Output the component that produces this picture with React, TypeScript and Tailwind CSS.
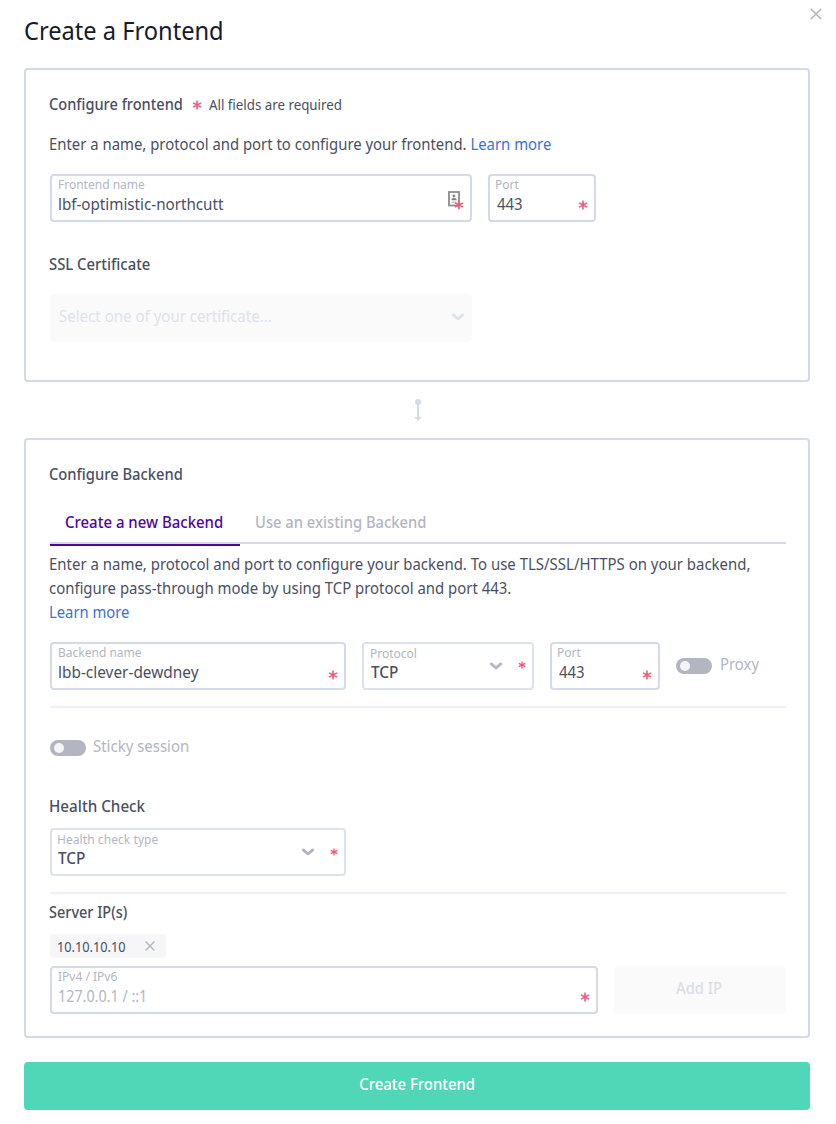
import type { ReactNode } from "react";

const FONT = "font-['Noto_Sans','Open_Sans',sans-serif]";

function Text({ children, className = "scale-x-[0.935]" }: { children: ReactNode; className?: string }) {
  return <span className={`inline-block origin-left ${className}`}>{children}</span>;
}

function Asterisk({ size = 10, className = "" }: { size?: number; className?: string }) {
  return (
    <svg width={size} height={size} viewBox="0 0 10 10" className={`shrink-0 ${className}`} stroke="#f0587c" strokeWidth="1.6" fill="none">
      <path d="M5 0.6V9.4M1 2.9L9 7.1M9 2.9L1 7.1" />
    </svg>
  );
}

function Chevron({ className = "" }: { className?: string }) {
  return (
    <svg width="14" height="10" viewBox="0 0 14 10" className={`shrink-0 ${className}`} stroke="currentColor" strokeWidth="2.8" strokeLinecap="round" strokeLinejoin="round" fill="none">
      <path d="M2.3 2.9L7 7L11.7 2.9" />
    </svg>
  );
}

function Cross({ size }: { size: number }) {
  return (
    <svg width={size} height={size} viewBox="0 0 12 12" stroke="#b2b6c3" strokeWidth="1.6" fill="none">
      <path d="M0.7 0.7L11.3 11.3M11.3 0.7L0.7 11.3" />
    </svg>
  );
}

function ContactIcon() {
  return (
    <svg width="12" height="16" viewBox="0 0 12 16" fill="none">
      <rect x="1" y="1" width="10" height="13.5" stroke="#8c8c8c" strokeWidth="1.8" />
      <circle cx="6" cy="5" r="1.4" fill="#858585" />
      <path d="M3.4 9.2C3.4 6 8.6 6 8.6 9.2Z" fill="#858585" />
      <path d="M3.4 11.2H8.6" stroke="#b0b0b0" />
    </svg>
  );
}

function Toggle() {
  return (
    <span className="flex h-4 w-9 shrink-0 items-center rounded-full bg-[#b2b6c3] pl-1">
      <span className="size-[10px] rounded-full bg-[#f5f5f8]" />
    </span>
  );
}

function Field({ label, value, className, children, light = false, labelClass = "" }: { label: string; value: ReactNode; className: string; children?: ReactNode; light?: boolean; labelClass?: string }) {
  return (
    <div className={`flex h-12 shrink-0 rounded-[4px] border-2 pl-1.5 ${light ? "border-[#dde1eb]" : "border-[#d4dae7]"} ${className}`}>
      <div className="flex min-w-0 flex-1 flex-col whitespace-nowrap">
        <div className={`mt-px h-4 text-[12px] leading-4 text-[#b2b6c3] ${labelClass}`}><span>{label}</span></div>
        <div className="-mt-px h-6 text-base leading-6">{value}</div>
      </div>
      {children}
    </div>
  );
}

export default function App() {
  return (
    <main className={`h-[1124px] w-[836px] bg-white px-6 text-base leading-6 whitespace-nowrap text-[#4a4f62] ${FONT}`}>
      <header className="flex h-[68px] justify-between">
        <h1 className="mt-3 text-[25px] leading-9 text-[#151a2d]"><Text className="scale-x-[0.945]">Create a Frontend</Text></h1>
        <button className="mt-2 -mr-2.5 flex size-3 items-center justify-center"><Cross size={12} /></button>
      </header>

      <section className="h-[314px] w-[786px] rounded-[4px] border-2 border-[#d4dae7] px-6 pt-[22px]">
        <div className="-ml-px flex h-6 items-center">
          <h2 className="w-[143px] font-medium"><Text className="scale-x-[0.911]">Configure frontend</Text></h2>
          <Asterisk className="mt-0.5" />
          <span className="mt-px ml-[7px] text-sm"><Text className="scale-x-[0.95]">All fields are required</Text></span>
        </div>
        <p className="mt-4 -ml-px"><Text className="scale-x-[0.93]">Enter a name, protocol and port to configure your frontend. <a className="text-[#426fd5]">Learn more</a></Text></p>
        <div className="mt-[18px] flex gap-4">
          <Field className="w-[422px]" label="Frontend name" value={<Text className="scale-x-[0.948]">lbf-optimistic-northcutt</Text>}>
            <span className="relative mt-[15px] mr-[10px] h-4 w-3">
              <ContactIcon />
              <Asterisk className="absolute top-[9px] left-[6px]" />
            </span>
          </Field>
          <Field className="w-[108px]" labelClass="-ml-px" label="Port" value={<Text className="ml-px scale-x-[0.935]">443</Text>}>
            <Asterisk className="mt-6 mr-1.5" />
          </Field>
        </div>
        <h3 className="mt-[30px] -ml-px font-medium"><Text className="scale-x-[0.928]">SSL Certificate</Text></h3>
        <div className="mt-[18px] flex h-12 w-[422px] items-center rounded-[4px] bg-[#fafafa] pr-[7px] pb-[3px] pl-[9px] text-[#dde2ec]">
          <span className="flex-1 pb-0.5"><Text className="scale-x-[0.94]">Select one of your certificate...</Text></span>
          <Chevron />
        </div>
      </section>

      <div className="flex h-14 w-[788px] items-center justify-center">
        <svg width="8" height="22" viewBox="0 0 8 22" fill="#d4dae7"><circle cx="4" cy="3" r="3" /><path d="M3 3H5V18H7.8L4 22L0.2 18H3Z" /></svg>
      </div>

      <section className="h-[600px] w-[786px] rounded-[4px] border-2 border-[#d4dae7] px-6 pt-[22px]">
        <h2 className="-ml-px font-medium"><Text className="scale-x-[0.921]">Configure Backend</Text></h2>
        <div className="mt-4 flex h-[42px] w-[736px] border-b-2 border-[#d4dae7]">
          <div className="h-11 w-[190px] shrink-0 border-b-2 border-[#4f0599] pl-[15px] leading-10 font-medium text-[#4f0599]"><Text>Create a new Backend</Text></div>
          <div className="pl-[15px] leading-10 font-medium text-[#b2b6c3]"><Text className="scale-x-[0.921]">Use an existing Backend</Text></div>
        </div>
        <p className="mt-2 -ml-px">
          <Text>Enter a name, protocol and port to configure your backend. To use TLS/SSL/HTTPS on your backend,</Text><br />
          <Text className="scale-x-[0.932]">configure pass-through mode by using TCP protocol and port 443.</Text><br />
          <a className="text-[#426fd5]"><Text className="scale-x-[0.925]">Learn more</Text></a>
        </p>
        <div className="mt-[18px] flex gap-4">
          <Field className="w-[296px]" label="Backend name" value={<Text className="scale-x-[0.962]">lbb-clever-dewdney</Text>}>
            <Asterisk className="mt-[26px] mr-1.5" />
          </Field>
          <Field light className="w-[172px]" labelClass="relative top-px" label="Protocol" value={<Text className="ml-px scale-x-[0.96] font-medium">TCP</Text>}>
            <Chevron className="mt-[17px] mr-[15px] text-[#b2b6c3]" />
            <Asterisk size={8} className="mt-[17px] mr-1.5" />
          </Field>
          <Field className="w-[110px]" labelClass="-ml-px" label="Port" value={<Text className="ml-px scale-x-[0.935]">443</Text>}>
            <Asterisk className="mt-[26px] mr-1.5" />
          </Field>
          <div className="flex h-12 items-center gap-2 text-[#b2b6c3]"><Toggle /><span className="pb-1"><Text className="scale-x-[0.93]">Proxy</Text></span></div>
        </div>
        <div className="mt-4 h-0.5 w-[736px] bg-[#eeeeff]" />
        <div className="mt-7 flex h-6 items-center gap-[7px] text-[#b2b6c3]"><Toggle /><span className="pb-1"><Text>Sticky session</Text></span></div>
        <h3 className="mt-[34px] -ml-px font-medium"><Text className="scale-x-[0.95]">Health Check</Text></h3>
        <Field light className="mt-2.5 w-[296px]" labelClass="relative top-px -ml-px tracking-[0.07px]" label="Health check type" value={<Text className="scale-x-[0.96] font-medium">TCP</Text>}>
          <Chevron className="mt-[17px] mr-[15px] text-[#b2b6c3]" />
          <Asterisk size={8} className="mt-[18px] mr-1.5" />
        </Field>
        <div className="mt-4 h-0.5 w-[736px] bg-[#eeeeff]" />
        <h3 className="mt-1.5 -ml-px font-medium"><Text className="scale-x-[0.905]">Server IP(s)</Text></h3>
        <div className="mt-2.5 flex h-6 w-[116px] items-center rounded-[4px] bg-[#f6f6f9] pr-[11px] pl-[7px] text-sm">
          <span className="mt-px w-[88px]"><Text className="scale-x-[0.91]">10.10.10.10</Text></span><Cross size={10} />
        </div>
        <div className="mt-2 flex gap-4">
          <Field className="w-[548px]" label="IPv4 / IPv6" value={<span className="text-[#b2b6c3]"><Text className="scale-x-[0.895]">127.0.0.1 / ::1</Text></span>}>
            <Asterisk className="mt-6 mr-1.5" />
          </Field>
          <button className="h-12 w-[172px] shrink-0 rounded-[4px] bg-[#fafafa] pr-0.5 pb-1 font-medium text-[#d9deea]"><span className="inline-block scale-x-[0.92]">Add IP</span></button>
        </div>
      </section>

      <button className="mt-6 h-12 w-[786px] rounded-[4px] bg-[#50d7b8] pb-1 font-medium text-white"><span className="inline-block scale-x-[0.93]">Create Frontend</span></button>
    </main>
  );
}
